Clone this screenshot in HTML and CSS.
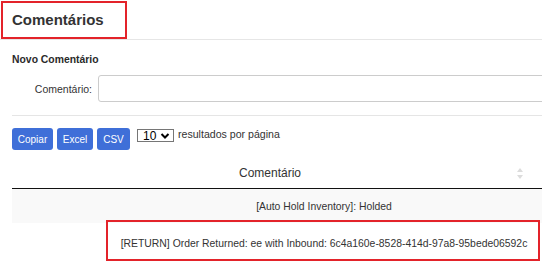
FILE: index.html
```html
<!DOCTYPE html>
<html lang="pt">
  <head>
    <meta charset="UTF-8" />
    <title>Comentários</title>
    <link rel="stylesheet" href="styles.css">
  </head>
  <body>
    <div class="box">
      <div class="box-header">
        <h3 class="box-title">Comentários</h3>
      </div>
      <div class="box-body">
        <h4 class="section-title">Novo Comentário</h4>
        <div class="form-row">
          <label class="form-label" for="comentario">Comentário:</label>
          <input class="form-input" id="comentario" type="text">
        </div>
        <div class="divider"></div>
        <div class="toolbar">
          <button class="btn btn-copy">Copiar</button>
          <button class="btn btn-excel">Excel</button>
          <button class="btn btn-csv">CSV</button>
          <span class="page-size">
            10
            <svg width="10" height="8" viewBox="0 0 10 8"><path d="M1.5 2 L5 5.5 L8.5 2" fill="none" stroke="#000" stroke-width="2"/></svg>
          </span>
          <span class="page-text">resultados por página</span>
        </div>
        <table class="data-table">
          <thead>
            <tr>
              <th>
                Comentário
                <svg class="sort-icon" width="6" height="11" viewBox="0 0 6 11"><path d="M3 0 L6 4 H0 Z M3 11 L6 7 H0 Z" fill="#dcdcdc"/></svg>
              </th>
            </tr>
          </thead>
          <tbody>
            <tr class="odd"><td>[Auto Hold Inventory]: Holded</td></tr>
            <tr class="even"><td>[RETURN] Order Returned: ee with Inbound: 6c4a160e-8528-414d-97a8-95bede06592c</td></tr>
          </tbody>
        </table>
      </div>
    </div>
    <div class="mark mark-title"></div>
    <div class="mark mark-row"></div>
  </body>
</html>
```

FILE: styles.css
```css
body {
  margin: 0;
  font-family: "Liberation Sans", Arial, sans-serif;
  color: #333;
  overflow: hidden;
}
.box-header {
  height: 39px;
  border-bottom: 1px solid #e6e6e6;
  padding-left: 12px;
  display: flex;
  align-items: center;
}
.box-title {
  margin: 0;
  font-size: 15px;
  font-weight: bold;
}
.box-body {
  padding-left: 12px;
}
.section-title {
  margin: 13px 0 0;
  font-size: 10.4px;
  line-height: 13px;
  font-weight: bold;
  color: #2a2a2a;
}
.form-row {
  display: flex;
  align-items: center;
  margin-top: 9px;
}
.form-label {
  flex: none;
  width: 80px;
  margin-right: 6px;
  text-align: right;
  font-size: 10.5px;
}
.form-input {
  flex: none;
  width: 500px;
  height: 27px;
  box-sizing: border-box;
  border: 1px solid #ccc;
  border-radius: 3px;
}
.divider {
  margin-top: 13px;
  border-top: 1px solid #e5e5e5;
}
.toolbar {
  display: flex;
  align-items: flex-start;
  margin-top: 12px;
}
.btn {
  height: 22px;
  margin-right: 4px;
  padding: 0;
  border: none;
  border-radius: 3px;
  background: #3f6fd8;
  color: #fff;
  font-family: "Liberation Sans", Arial, sans-serif;
  font-size: 10px;
}
.btn-copy { width: 41px; }
.btn-excel { width: 36px; }
.btn-csv { width: 33px; }
.page-size {
  display: flex;
  align-items: center;
  justify-content: space-between;
  box-sizing: border-box;
  width: 37px;
  height: 13px;
  margin: 1px 0 0 3px;
  padding: 0 3px 0 5px;
  border: 1px solid #767676;
  font-size: 12px;
  color: #000;
}
.page-text {
  margin: 0 0 0 4px;
  font-size: 10.6px;
  line-height: 13px;
}
.data-table {
  width: 530px;
  margin-top: 8px;
  border-collapse: collapse;
  font-size: 12px;
}
.data-table th {
  position: relative;
  height: 30px;
  padding: 0 24px 0 10px;
  border-bottom: 1px solid #111;
  font-weight: normal;
  text-align: center;
}
.sort-icon {
  position: absolute;
  right: 19px;
  top: 10px;
}
.data-table td {
  height: 34px;
  padding: 0 0 0 94px;
  font-size: 10.4px;
  text-align: center;
  white-space: nowrap;
}
.data-table tr.even td {
  height: 40px;
}
.data-table tr.odd td {
  background: #f9f9f9;
}
.mark {
  position: absolute;
  border: 2px solid #e3232a;
}
.mark-title {
  left: 1px;
  top: 1px;
  width: 122px;
  height: 34px;
}
.mark-row {
  left: 106px;
  top: 220px;
  width: 430px;
  height: 37px;
}
```
